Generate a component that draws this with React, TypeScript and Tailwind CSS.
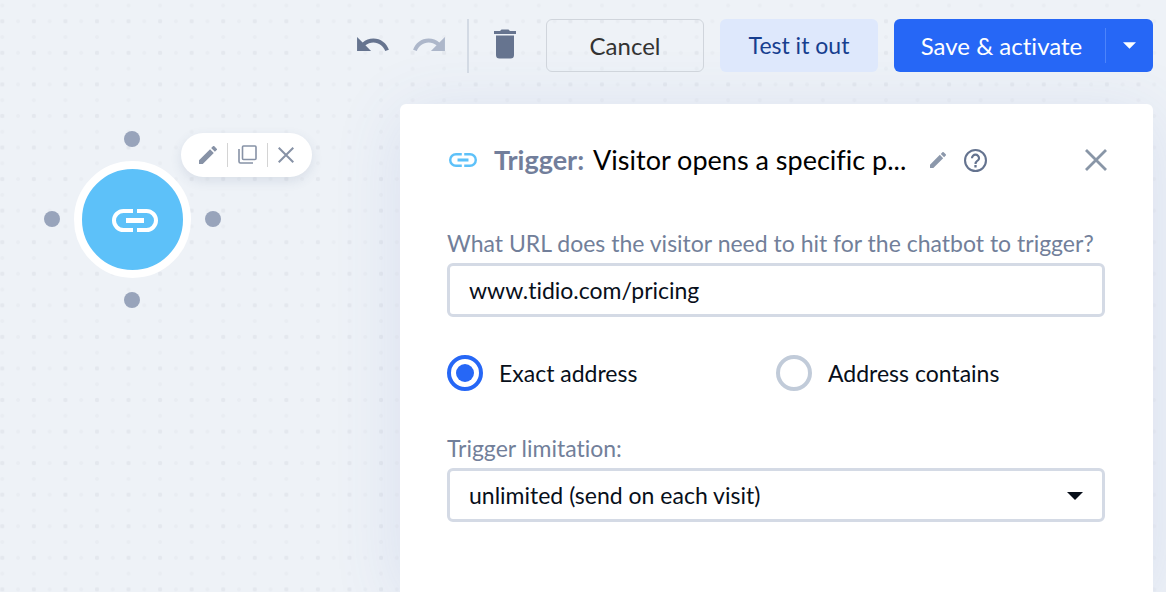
import { useState } from 'react';
import type { ReactNode } from 'react';

function LinkIcon({ className }: { className: string }) {
  return (
    <svg viewBox="0 0 46 23" className={className} fill="none" stroke="currentColor" aria-hidden="true">
      <path d="M21 2H11.5a9.5 9.5 0 0 0 0 19H21M25 2h9.5a9.5 9.5 0 0 1 0 19H25" strokeWidth="4" />
      <path d="M14 11.5h18" strokeWidth="5" />
    </svg>
  );
}

function PencilIcon({ className }: { className: string }) {
  return (
    <svg viewBox="3 3 18 18" className={className} fill="currentColor" aria-hidden="true">
      <path d="M3 17.25V21h3.75L17.81 9.94l-3.75-3.75L3 17.25zM20.71 7.04a1 1 0 0 0 0-1.41l-2.34-2.34a1 1 0 0 0-1.41 0l-1.83 1.83 3.75 3.75 1.83-1.83z" />
    </svg>
  );
}

function CloseIcon({ className }: { className: string }) {
  return (
    <svg viewBox="0 0 22 22" className={className} fill="none" stroke="currentColor" aria-hidden="true">
      <path d="M1 1l20 20M21 1L1 21" strokeWidth="2.8" />
    </svg>
  );
}

function UndoIcon({ className }: { className: string }) {
  return (
    <svg viewBox="2 7 20.5 9" className={className} fill="currentColor" aria-hidden="true">
      <path d="M12.5 8c-2.650 0-5.050.99-6.900 2.600L2 7v9h9l-3.620-3.620c1.390-1.160 3.160-1.880 5.120-1.880 3.540 0 6.550 2.310 7.600 5.500l2.370-.78C21.080 11.030 17.150 8 12.500 8z" />
    </svg>
  );
}

function TrashIcon() {
  return (
    <svg viewBox="0 0 22 30" className="h-[30px] w-[22px]" fill="currentColor" aria-hidden="true">
      <path d="M0 2h6l1.500-1.500h7L16 2h6v3H0zM2 6.500h18V26a3.500 3.500 0 0 1-3.500 3.500h-11A3.500 3.500 0 0 1 2 26z" />
    </svg>
  );
}

function CaretIcon({ className }: { className: string }) {
  return (
    <svg viewBox="0 0 16 8" className={className} fill="currentColor" aria-hidden="true">
      <path d="M0 0h16L8 8z" />
    </svg>
  );
}

function DotGrid() {
  return (
    <svg className="absolute inset-0 h-full w-full" aria-hidden="true">
      <defs>
        <pattern id="dots" x="-13.5" y="5.500" width="31.560" height="31.560" patternUnits="userSpaceOnUse">
          <circle cx="15.800" cy="15.800" r="2.200" fill="#e4e8ee" />
          <circle cx="0" cy="15.800" r="2" fill="#e9edf2" />
          <circle cx="31.560" cy="15.800" r="2" fill="#e9edf2" />
          <circle cx="15.800" cy="0" r="2" fill="#e9edf2" />
          <circle cx="15.800" cy="31.560" r="2" fill="#e9edf2" />
        </pattern>
      </defs>
      <rect width="100%" height="100%" fill="url(#dots)" />
    </svg>
  );
}

function Toolbar() {
  return (
    <header className="relative z-10 flex h-[104px] items-start justify-end pr-[13px] pt-[19px]">
      <div className="flex h-[53px] items-center text-[#66748f]">
        <button type="button" aria-label="Undo" className="pb-[3px]">
          <UndoIcon className="h-[14px] w-8" />
        </button>
        <button type="button" aria-label="Redo" className="ml-6 pb-[3px] text-[#adb7ca]">
          <UndoIcon className="h-[14px] w-8 -scale-x-100" />
        </button>
        <span className="ml-[22px] h-[54px] w-[2px] bg-[#d3dae4]" />
        <button type="button" aria-label="Delete" className="ml-[25px] pb-[3px]">
          <TrashIcon />
        </button>
      </div>
      <div className="ml-[30px] flex gap-4 text-[24px]">
        <button type="button" className="h-[53px] w-[158px] rounded-md border border-[#d0d5dc] text-[#333333]">
          Cancel
        </button>
        <button type="button" className="h-[53px] w-[158px] rounded-md bg-[#dee8fc] text-[23px] text-[#173e8f]">
          Test it out
        </button>
        <div className="flex h-[53px] items-center rounded-md bg-[#2667f6] text-white">
          <button type="button" className="h-full w-[211px] pl-1">
            Save &amp; activate
          </button>
          <span className="h-[35px] w-px bg-[#4c84fb]" />
          <button type="button" aria-label="More options" className="flex h-full w-[47px] items-center justify-center">
            <CaretIcon className="h-[7px] w-[13px]" />
          </button>
        </div>
      </div>
    </header>
  );
}

function TriggerNode() {
  return (
    <div className="absolute left-[74px] top-[57px] h-[117px] w-[117px]">
      <div className="flex h-full w-full items-center justify-center rounded-full border-8 border-white bg-[#5dc1f9] pl-1 pt-px text-white">
        <LinkIcon className="h-[23px] w-[46px]" />
      </div>
      <span className="absolute -top-[30px] left-[50px] h-4 w-4 rounded-full bg-[#98a4bb]" />
      <span className="absolute -bottom-[30px] left-[50px] h-4 w-4 rounded-full bg-[#98a4bb]" />
      <span className="absolute -left-[30px] top-[50px] h-4 w-4 rounded-full bg-[#98a4bb]" />
      <span className="absolute -right-[30px] top-[50px] h-4 w-4 rounded-full bg-[#98a4bb]" />
      <div className="absolute left-[107px] -top-[28px] flex h-11 w-[131px] items-center justify-center gap-[10px] rounded-full bg-white pb-px text-[#8792a6] shadow-[0_4px_12px_rgba(60,80,120,0.12)]">
        <button type="button" aria-label="Edit">
          <PencilIcon className="h-[18px] w-[18px]" />
        </button>
        <span className="h-6 w-px bg-[#d4d4d4]" />
        <button type="button" aria-label="Duplicate">
          <svg viewBox="0 0 19 19" className="h-[19px] w-[19px]" fill="none" stroke="currentColor" strokeWidth="1.600" aria-hidden="true">
            <rect x="4.500" y="1" width="13.500" height="13.500" rx="1" />
            <path d="M1 4v12.500a1.500 1.500 0 0 0 1.500 1.500H15" />
          </svg>
        </button>
        <span className="h-6 w-px bg-[#d4d4d4]" />
        <button type="button" aria-label="Remove">
          <CloseIcon className="h-4 w-4" />
        </button>
      </div>
    </div>
  );
}

interface RadioProps {
  children: ReactNode;
  checked: boolean;
  onChange: () => void;
}

function Radio({ children, checked, onChange }: RadioProps) {
  return (
    <label className="flex items-center gap-4">
      <input
        type="radio"
        name="match"
        checked={checked}
        onChange={onChange}
        className="h-9 w-9 shrink-0 appearance-none rounded-full border-4 border-[#c1cbd9] bg-clip-content p-[5px] checked:border-[#2667f6] checked:bg-[#2667f6]"
      />
      {children}
    </label>
  );
}

function TriggerPanel() {
  const [url, setUrl] = useState('www.tidio.com/pricing');
  const [match, setMatch] = useState('exact');

  return (
    <section className="min-w-0 flex-1 rounded-t-md bg-white pl-[47px] pr-12 pt-10 text-[23px] leading-7 text-[#080f1a] shadow-[0_10px_70px_rgba(70,100,190,0.12)]">
      <div className="-mr-[2px] flex h-8 items-center">
        <LinkIcon className="ml-[2px] h-[14px] w-7 text-[#5dc1f9]" />
        <h2 className="ml-[17px] flex gap-[9px] whitespace-nowrap text-[27px] leading-8 text-black">
          <span className="font-bold text-[#727e9b]">Trigger:</span>
          <span>Visitor opens a specific p...</span>
        </h2>
        <button type="button" aria-label="Rename" className="ml-6 text-[#8c98ab]">
          <PencilIcon className="h-4 w-4" />
        </button>
        <button type="button" aria-label="Help" className="ml-[18px] text-[#64738f]">
          <svg viewBox="2 2 20 20" className="h-[23px] w-[23px]" fill="currentColor" aria-hidden="true">
            <path d="M11 16h2v2h-2zM12 2a10 10 0 1 0 0 20 10 10 0 0 0 0-20zm0 18.200a8.200 8.200 0 1 1 0-16.400 8.200 8.200 0 0 1 0 16.400zM12 6a4 4 0 0 0-4 4h1.900c0-1.100 1-2.100 2.100-2.100s2.100 1 2.100 2.100c0 2-3 1.750-3 5H13c0-2.250 3-2.500 3-5a4 4 0 0 0-4-4z" />
          </svg>
        </button>
        <button type="button" aria-label="Close" className="ml-auto text-[#8996a7]">
          <CloseIcon className="h-[22px] w-[22px]" />
        </button>
      </div>

      <label htmlFor="url" className="mt-[53px] block whitespace-nowrap text-[#727f9a]">
        What URL does the visitor need to hit for the chatbot to trigger?
      </label>
      <input
        id="url"
        type="text"
        value={url}
        onChange={(e) => setUrl(e.target.value)}
        className="mt-[6px] block h-[54px] w-full rounded-md border-[3px] border-[#d4dae5] px-[19px]"
      />

      <div className="mt-[38px] grid grid-cols-2">
        <Radio checked={match === 'exact'} onChange={() => setMatch('exact')}>
          Exact address
        </Radio>
        <Radio checked={match === 'contains'} onChange={() => setMatch('contains')}>
          Address contains
        </Radio>
      </div>

      <label htmlFor="limit" className="mt-[43px] block text-[#727f9a]">
        Trigger limitation:
      </label>
      <div className="relative mt-[6px]">
        <select
          id="limit"
          className="block h-[54px] w-full appearance-none rounded-md border-[3px] border-[#d4dae5] bg-white px-[19px]"
        >
          <option>unlimited (send on each visit)</option>
        </select>
        <CaretIcon className="pointer-events-none absolute right-[22px] top-6 h-2 w-4" />
      </div>
    </section>
  );
}

export default function App() {
  return (
    <div className="relative flex min-h-screen flex-col overflow-hidden bg-[#eef2f7] font-['Lato',sans-serif] [font-variant-ligatures:none]">
      <DotGrid />
      <Toolbar />
      <main className="relative flex flex-1 pr-[13px]">
        <div className="relative w-[400px] shrink-0">
          <TriggerNode />
        </div>
        <TriggerPanel />
      </main>
    </div>
  );
}
